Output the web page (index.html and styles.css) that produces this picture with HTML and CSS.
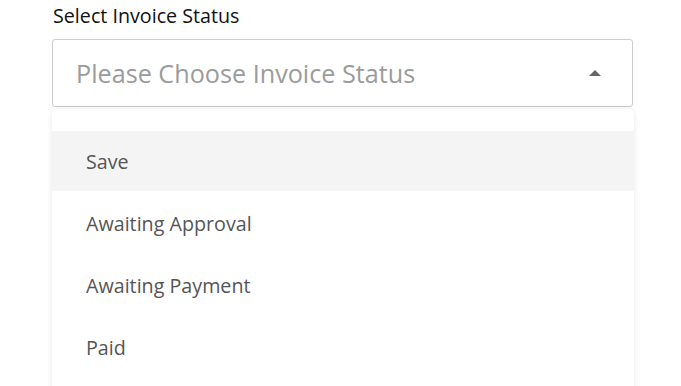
FILE: index.html
```html
<!DOCTYPE html>
<html>
<head>
<meta charset="utf-8">
<link rel="stylesheet" href="styles.css">
</head>
<body>
<div class="field">
  <label class="label">Select Invoice Status</label>
  <div class="select">
    <span class="placeholder">Please Choose Invoice Status</span>
    <span class="caret"></span>
  </div>
  <ul class="menu">
    <li class="item active">Save</li>
    <li class="item">Awaiting Approval</li>
    <li class="item">Awaiting Payment</li>
    <li class="item">Paid</li>
  </ul>
</div>
</body>
</html>
```
FILE: styles.css
```css
html, body {
  margin: 0;
  padding: 0;
  background: #fff;
  height: 386px;
  overflow: hidden;
}
body {
  font-family: "Open Sans", "Noto Sans", sans-serif;
}
.field {
  margin-left: 52px;
  width: 582px;
  padding-top: 2px;
  display: flex;
  flex-direction: column;
}
.label {
  font-size: 19.7px;
  line-height: 27px;
  color: #111;
  padding-left: 1px;
  margin-bottom: 10px;
}
.select {
  box-sizing: border-box;
  width: 581px;
  height: 68px;
  border: 1px solid #cdcdcd;
  border-radius: 3px;
  display: flex;
  align-items: center;
  justify-content: space-between;
  padding: 0 31px 0 23px;
}
.placeholder {
  font-size: 25.2px;
  color: #9b9b9b;
  line-height: 34px;
}
.caret {
  width: 0;
  height: 0;
  border-left: 6px solid transparent;
  border-right: 6px solid transparent;
  border-bottom: 6px solid #666;
}
.menu {
  list-style: none;
  margin: 2px 0 0 0;
  padding: 22px 0 30px 0;
  background: #fff;
  border-radius: 5px;
  box-shadow: 0 0 6px rgba(0, 0, 0, 0.09);
  display: flex;
  flex-direction: column;
  gap: 2px;
}
.item {
  height: 60px;
  display: flex;
  align-items: center;
  padding-left: 34px;
  font-size: 19.7px;
  color: #555;
}
.item.active {
  background: #f4f4f4;
}
```
